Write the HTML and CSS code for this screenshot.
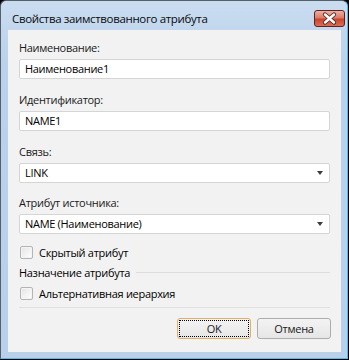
FILE: index.html
```html
<!DOCTYPE html>
<html lang="ru">
<head>
  <meta charset="UTF-8" />
  <title>Свойства заимствованного атрибута</title>
  <link rel="stylesheet" href="styles.css">
</head>
<body>
  <div class="window">
    <div class="titlebar">
      <span class="title">Свойства заимствованного атрибута</span>
      <div class="close">
        <svg width="31" height="17" viewBox="0 0 31 17">
          <path d="M11 4.5 L20 12.5 M20 4.5 L11 12.5" stroke="#4a2a2a" stroke-width="4.2" stroke-linecap="round" />
          <path d="M11 4.5 L20 12.5 M20 4.5 L11 12.5" stroke="#ffffff" stroke-width="2.4" stroke-linecap="round" />
        </svg>
      </div>
    </div>

    <div class="client">
      <div class="field">
        <div class="label">Наименование:</div>
        <div class="input">Наименование1</div>
      </div>
      <div class="field">
        <div class="label">Идентификатор:</div>
        <div class="input">NAME1</div>
      </div>
      <div class="field field-tight">
        <div class="label">Связь:</div>
        <div class="input select">LINK<span class="arrow"></span></div>
      </div>
      <div class="field field-last">
        <div class="label">Атрибут источника:</div>
        <div class="input select">NAME (Наименование)<span class="arrow"></span></div>
      </div>

      <div class="check"><span class="box"></span>Скрытый атрибут</div>

      <div class="group">
        <span>Назначение атрибута</span>
        <span class="group-line"></span>
      </div>
      <div class="check check-second"><span class="box"></span>Альтернативная иерархия</div>

      <div class="separator"></div>

      <div class="buttons">
        <div class="btn btn-default"><span class="focus">OK</span></div>
        <div class="btn">Отмена</div>
      </div>
    </div>
  </div>
</body>
</html>
```

FILE: styles.css
```css
html, body {
  margin: 0;
  padding: 0;
  background: #000;
  font-family: 'Open Sans', 'Noto Sans', sans-serif;
  font-size: 11px;
  letter-spacing: -0.3px;
  color: #000;
}

.window {
  width: 348px;
  height: 359px;
  box-sizing: border-box;
  border: 1px solid #56606c;
  border-right-color: #4fbde8;
  border-bottom-color: #4fbde8;
  border-radius: 6px 6px 0 0;
  background: linear-gradient(#cadcf0, #bad2eb 60px, #b8d0ea);
  padding: 0 6px 6px 7px;
  display: flex;
  flex-direction: column;
}

.titlebar {
  height: 29px;
  display: flex;
  justify-content: space-between;
  align-items: flex-start;
}

.title {
  margin: 10px 0 0 4px;
  line-height: 15px;
  font-size: 11.5px;
  letter-spacing: -0.35px;
  color: #0a0a0a;
}

.close {
  width: 31px;
  height: 17px;
  margin: 9px -4px 0 0;
  box-sizing: border-box;
  border: 1px solid #5e2320;
  border-radius: 3px;
  background: linear-gradient(#eeb0a0, #dc7b68 45%, #c9442c 55%, #dc6e55);
  display: flex;
  overflow: hidden;
}

.close svg {
  margin: -1px;
}

.client {
  flex: 1;
  background: #f2f2f2;
  padding: 10px 11px 13px 11px;
  display: flex;
  flex-direction: column;
}

.field {
  display: flex;
  flex-direction: column;
  gap: 4px;
  margin-bottom: 13px;
}

.field-tight {
  margin-bottom: 12px;
}

.field-last {
  margin-bottom: 11px;
}

.label {
  line-height: 15px;
  color: #1a1a1a;
}

.input {
  height: 20px;
  box-sizing: border-box;
  border: 1px solid #d5d5d5;
  border-radius: 2px;
  background: #fff;
  padding: 0 5px;
  line-height: 18px;
}

.select {
  display: flex;
  justify-content: space-between;
  align-items: center;
  padding-right: 6px;
}

.arrow {
  width: 0;
  height: 0;
  border-left: 3.5px solid transparent;
  border-right: 3.5px solid transparent;
  border-top: 4px solid #3c3c3c;
}

.check {
  display: flex;
  align-items: center;
  gap: 6px;
  height: 15px;
  padding-left: 1px;
}

.check-second {
  margin-top: 6px;
}

.box {
  width: 13px;
  height: 13px;
  box-sizing: border-box;
  border: 1px solid #b4b4b4;
  border-radius: 2px;
  background: linear-gradient(135deg, #e4e4e4, #ffffff);
  box-shadow: inset 0 0 0 1px #f4f4f4;
}

.group {
  margin-top: 5px;
  height: 15px;
  display: flex;
  align-items: center;
  gap: 6px;
}

.group-line {
  flex: 1;
  border-top: 1px solid #dddddd;
  margin-top: -1px;
}

.separator {
  margin-top: 6px;
  height: 1px;
  background: #dfdfdf;
}

.buttons {
  margin: 10px -1px 0 0;
  display: flex;
  justify-content: flex-end;
  gap: 6px;
}

.btn {
  width: 74px;
  height: 21px;
  box-sizing: border-box;
  border: 1px solid #adadad;
  border-radius: 3px;
  background: linear-gradient(#f3f3f3, #e6e6e6);
  display: flex;
  align-items: center;
  justify-content: center;
  line-height: 15px;
  color: #1a1a1a;
}

.btn-default {
  border-color: #dfb066;
  padding: 1px;
}

.focus {
  flex: 1;
  align-self: stretch;
  border: 1px dotted #000;
  display: flex;
  align-items: center;
  justify-content: center;
}
```
